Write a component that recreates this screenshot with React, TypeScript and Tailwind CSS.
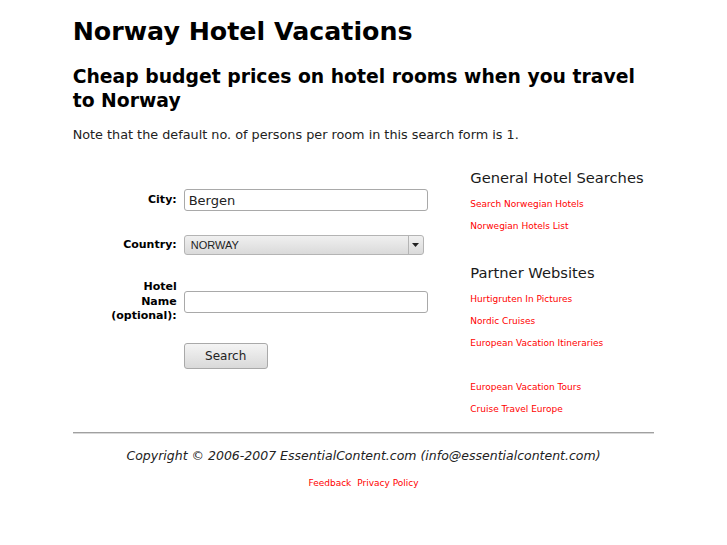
import React from "react";

const font = { fontFamily: '"DejaVu Sans", Verdana, sans-serif' };

function Label({ children }: { children: React.ReactNode }) {
  return (
    <div className="w-[104px] text-right text-[11px] font-bold leading-[14.5px] text-black">
      {children}
    </div>
  );
}

function SideLink({ children }: { children: React.ReactNode }) {
  return (
    <a href="#" className="block h-[22px] text-[9px] leading-[22px] text-[#ff0000] no-underline">
      {children}
    </a>
  );
}

export default function App() {
  return (
    <div className="min-h-[545px] bg-white font-['DejaVu_Sans',sans-serif] text-black">
      <div className="mx-auto w-[80%]">
        <h1 className="pt-[15px] text-[25.3px] font-bold leading-[34px]">Norway Hotel Vacations</h1>
        <h2 className="mt-[16px] text-[18.8px] font-bold leading-[24px]">
          Cheap budget prices on hotel rooms when you travel to Norway
        </h2>
        <p className="mt-[14px] text-[12.8px] leading-[16px] text-[#222]">
          Note that the default no. of persons per room in this search form is 1.
        </p>

        <div className="mt-[25px] flex">
          <div className="flex-1 pt-[21px]">
            <div className="flex items-center gap-[7px]">
              <Label>City:</Label>
              <input
                readOnly
                value="Bergen"
                className="h-[22px] w-[244px] rounded-[3px] border border-[#a9a9a9] bg-white px-[4px] text-[13px] text-[#222] outline-none"
                style={font}
              />
            </div>
            <div className="mt-[24px] flex items-center gap-[7px]">
              <Label>Country:</Label>
              <div className="flex h-[20px] w-[240px] items-center rounded-[3px] border border-[#b4b4b4] bg-gradient-to-b from-[#f0f0f0] to-[#dadada]">
                <span className="flex-1 pl-[6px] font-['Liberation_Sans',Arial,sans-serif] text-[11px] text-[#222]">
                  NORWAY
                </span>
                <span className="flex h-full w-[15px] items-center justify-center border-l border-[#b4b4b4]">
                  <svg width="7" height="4" viewBox="0 0 7 4">
                    <path d="M0 0 L7 0 L3.5 4 Z" fill="#222" />
                  </svg>
                </span>
              </div>
            </div>
            <div className="mt-[25px] flex items-center gap-[7px]">
              <Label>
                Hotel
                <br />
                Name
                <br />
                (optional):
              </Label>
              <input
                readOnly
                value=""
                className="h-[22px] w-[244px] rounded-[3px] border border-[#a9a9a9] bg-white px-[4px] text-[13px] outline-none"
                style={font}
              />
            </div>
            <div className="mt-[19px] pl-[111px]">
              <button
                className="h-[26px] w-[84px] rounded-[3px] border border-[#a9a9a9] bg-gradient-to-b from-[#f4f4f4] to-[#d9d9d9] text-[12px] text-[#222]"
                style={font}
              >
                Search
              </button>
            </div>
          </div>

          <div className="w-[184px] pt-[1px]">
            <h3 className="text-[14.7px] leading-[18px] text-[#1a1a1a]">General Hotel Searches</h3>
            <div className="mt-[6px]">
              <SideLink>Search Norwegian Hotels</SideLink>
              <SideLink>Norwegian Hotels List</SideLink>
            </div>
            <h3 className="mt-[27px] text-[14.7px] leading-[18px] text-[#1a1a1a]">Partner Websites</h3>
            <div className="mt-[6px]">
              <SideLink>Hurtigruten In Pictures</SideLink>
              <SideLink>Nordic Cruises</SideLink>
              <SideLink>European Vacation Itineraries</SideLink>
              <div className="h-[22px]" />
              <SideLink>European Vacation Tours</SideLink>
              <SideLink>Cruise Travel Europe</SideLink>
            </div>
          </div>
        </div>

        <div className="mt-[12px] h-[2px] border-t border-b border-t-[#a0a0a0] border-b-[#d8d8d8]" />
        <p className="mt-[13px] text-center text-[12.5px] italic leading-[18px] text-[#222]">
          Copyright © 2006-2007 EssentialContent.com (info@essentialcontent.com)
        </p>
        <p className="mt-[12px] text-center text-[9px] leading-[12px]">
          <a href="#" className="text-[#ff0000]">Feedback</a>
          <span> </span>
          <a href="#" className="ml-[3px] text-[#ff0000]">Privacy Policy</a>
        </p>
      </div>
    </div>
  );
}
